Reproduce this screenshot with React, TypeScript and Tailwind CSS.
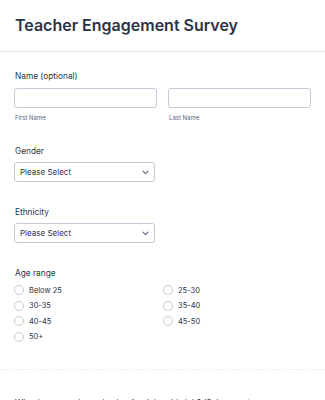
import React from "react";

const Chevron = () => (
  <svg width="7" height="5" viewBox="0 0 7 5" fill="none">
    <path d="M1 1.2L3.5 3.6L6 1.2" stroke="#57647e" strokeWidth="1.1" strokeLinecap="round" strokeLinejoin="round" />
  </svg>
);

const Select = () => (
  <div className="w-[141px] h-[20px] border border-[#c3cad8] rounded-[3px] flex items-center justify-between pl-[5px] pr-[5px] text-[8px] text-[#2c3345]">
    <span>Please Select</span>
    <Chevron />
  </div>
);

const Radio = ({ label }: { label: string }) => (
  <div className="flex items-center h-[15.5px]">
    <div className="w-[10px] h-[10px] rounded-full border border-[#c3cad8] bg-white" />
    <span className="ml-[5px] text-[7.5px] text-[#2c3345]">{label}</span>
  </div>
);

export default function App() {
  return (
    <div className="w-[325px] h-[400px] overflow-hidden bg-white font-['Inter',sans-serif] text-[#2c3345]">
      <div className="h-[52px] border-b border-[#e6e8ec] pl-[15px] pt-[13px]">
        <h1 className="text-[16px] leading-[24px] font-semibold text-[#2c3345]">Teacher Engagement Survey</h1>
      </div>
      <div className="px-[14px]">
        <div className="pt-[17px]">
          <div className="pl-[1px] text-[8.3px] leading-[14px]">Name (optional)</div>
          <div className="mt-[5px] flex gap-[11px]">
            <div className="flex flex-col">
              <div className="w-[143px] h-[20px] border border-[#c3cad8] rounded-[3px]" />
              <span className="mt-[5px] pl-[1px] text-[6px] leading-[10px] text-[#57647e]">First Name</span>
            </div>
            <div className="flex flex-col">
              <div className="w-[143px] h-[20px] border border-[#c3cad8] rounded-[3px]" />
              <span className="mt-[5px] pl-[1px] text-[6px] leading-[10px] text-[#57647e]">Last Name</span>
            </div>
          </div>
        </div>
        <div className="pt-[21px]">
          <div className="pl-[1px] text-[8.3px] leading-[14px]">Gender</div>
          <div className="mt-[4px]"><Select /></div>
        </div>
        <div className="pt-[23px]">
          <div className="pl-[1px] text-[8.3px] leading-[14px]">Ethnicity</div>
          <div className="mt-[4px]"><Select /></div>
        </div>
        <div className="pt-[23px]">
          <div className="pl-[1px] text-[8.3px] leading-[14px]">Age range</div>
          <div className="mt-[2.5px] grid grid-cols-[149px_1fr]">
            <Radio label="Below 25" />
            <Radio label="25-30" />
            <Radio label="30-35" />
            <Radio label="35-40" />
            <Radio label="40-45" />
            <Radio label="45-50" />
            <Radio label="50+" />
          </div>
        </div>
      </div>
      <div className="mt-[24px] border-t border-dashed border-[#eceef1]" />
      <div className="pt-[26px] pl-[15px] text-[8.3px] leading-[14px]">What is your main motivation for doing this job? (Select one)</div>
    </div>
  );
}
